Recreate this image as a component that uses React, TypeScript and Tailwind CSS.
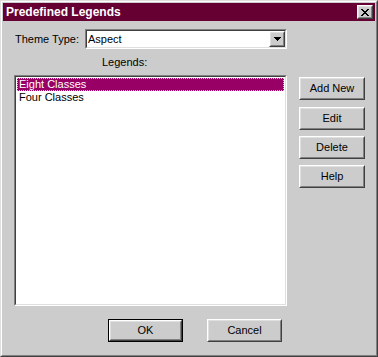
import React from "react";

const font = { fontFamily: '"Liberation Sans", Arial, sans-serif' };

// Classic raised 3D button frame
const Raised = ({ className = "", children }: { className?: string; children?: React.ReactNode }) => (
  <div className={`border border-t-white border-l-white border-r-[#404040] border-b-[#404040] ${className}`}>
    <div className="w-full h-full border border-t-[#dfdfdf] border-l-[#dfdfdf] border-r-[#808080] border-b-[#808080] bg-[#cccccc] flex items-center justify-center">
      {children}
    </div>
  </div>
);

// Classic sunken field frame
const Sunken = ({ className = "", children }: { className?: string; children?: React.ReactNode }) => (
  <div className={`border border-t-[#808080] border-l-[#808080] border-r-white border-b-white ${className}`}>
    <div className="w-full h-full border border-t-[#404040] border-l-[#404040] border-r-[#dfdfdf] border-b-[#dfdfdf] bg-white">
      {children}
    </div>
  </div>
);

const PushButton = ({ label, isDefault = false }: { label: string; isDefault?: boolean }) =>
  isDefault ? (
    <div className="w-[75px] h-[23px] border border-black">
      <Raised className="w-full h-full">
        <span className="text-[11px] text-black">{label}</span>
      </Raised>
    </div>
  ) : (
    <Raised className="w-[75px] h-[23px]">
      <span className="text-[11px] text-black">{label}</span>
    </Raised>
  );

const SideButton = ({ label, className = "" }: { label: string; className?: string }) => (
  <Raised className={`w-[66px] h-[23px] ${className}`}>
    <span className="text-[11px] text-black">{label}</span>
  </Raised>
);

export default function App() {
  return (
    <div style={font} className="w-[378px] h-[357px] bg-[#cccccc] select-none">
      <div className="w-full h-full border border-t-[#dfdfdf] border-l-[#dfdfdf] border-r-[#404040] border-b-[#404040]">
        <div className="w-full h-full border border-t-white border-l-white border-r-[#808080] border-b-[#808080] p-px flex flex-col">
          {/* Title bar */}
          <div className="h-[18px] bg-[#660033] flex items-center pl-[3px] pr-[2px] shrink-0">
            <span className="text-[12px] font-bold text-white leading-none">Predefined Legends</span>
            <div className="flex-1" />
            <Raised className="w-[16px] h-[14px]">
              <svg width="8" height="7" viewBox="0 0 8 7" shapeRendering="crispEdges">
                <path d="M0 0h2v1h-2zM6 0h2v1h-2zM1 1h2v1h-2zM5 1h2v1h-2zM2 2h4v1h-4zM3 3h2v1h-2zM2 4h4v1h-4zM1 5h2v1h-2zM5 5h2v1h-2zM0 6h2v1h-2zM6 6h2v1h-2z" fill="#000" />
              </svg>
            </Raised>
          </div>

          {/* Body */}
          <div className="flex-1 pl-[11px] pt-[8px]">
            <div className="flex items-center h-[20px]">
              <span className="text-[11px] text-black ml-px w-[70px]">Theme Type:</span>
              <Sunken className="w-[202px] h-[20px]">
                <div className="flex items-center h-full">
                  <span className="text-[11px] text-black pl-[1px] flex-1">Aspect</span>
                  <Raised className="w-[16px] h-[16px]">
                    <svg width="7" height="4" viewBox="0 0 7 4" shapeRendering="crispEdges">
                      <path d="M0 0h7v1h-7zM1 1h5v1h-5zM2 2h3v1h-3zM3 3h1v1h-1z" fill="#000" />
                    </svg>
                  </Raised>
                </div>
              </Sunken>
            </div>

            <div className="h-[26px] flex items-center pl-[88px]">
              <span className="text-[11px] text-black">Legends:</span>
            </div>

            <div className="flex">
              <Sunken className="w-[273px] h-[231px]">
                <div className="pt-px pl-px pr-px">
                  <div className="h-[13px] bg-[#990066] border border-dotted border-[#66ff99] flex items-center">
                    <span className="text-[11px] text-white pl-px leading-none">Eight Classes</span>
                  </div>
                  <div className="h-[13px] flex items-center">
                    <span className="text-[11px] text-black pl-[2px] leading-none">Four Classes</span>
                  </div>
                </div>
              </Sunken>

              <div className="flex flex-col ml-[12px] pt-[2px]">
                <SideButton label="Add New" />
                <SideButton label="Edit" className="mt-[7px]" />
                <SideButton label="Delete" className="mt-[6px]" />
                <SideButton label="Help" className="mt-[6px]" />
              </div>
            </div>

            <div className="flex mt-[13px] pl-[94px] gap-[24px]">
              <PushButton label="OK" isDefault />
              <PushButton label="Cancel" />
            </div>
          </div>
        </div>
      </div>
    </div>
  );
}
